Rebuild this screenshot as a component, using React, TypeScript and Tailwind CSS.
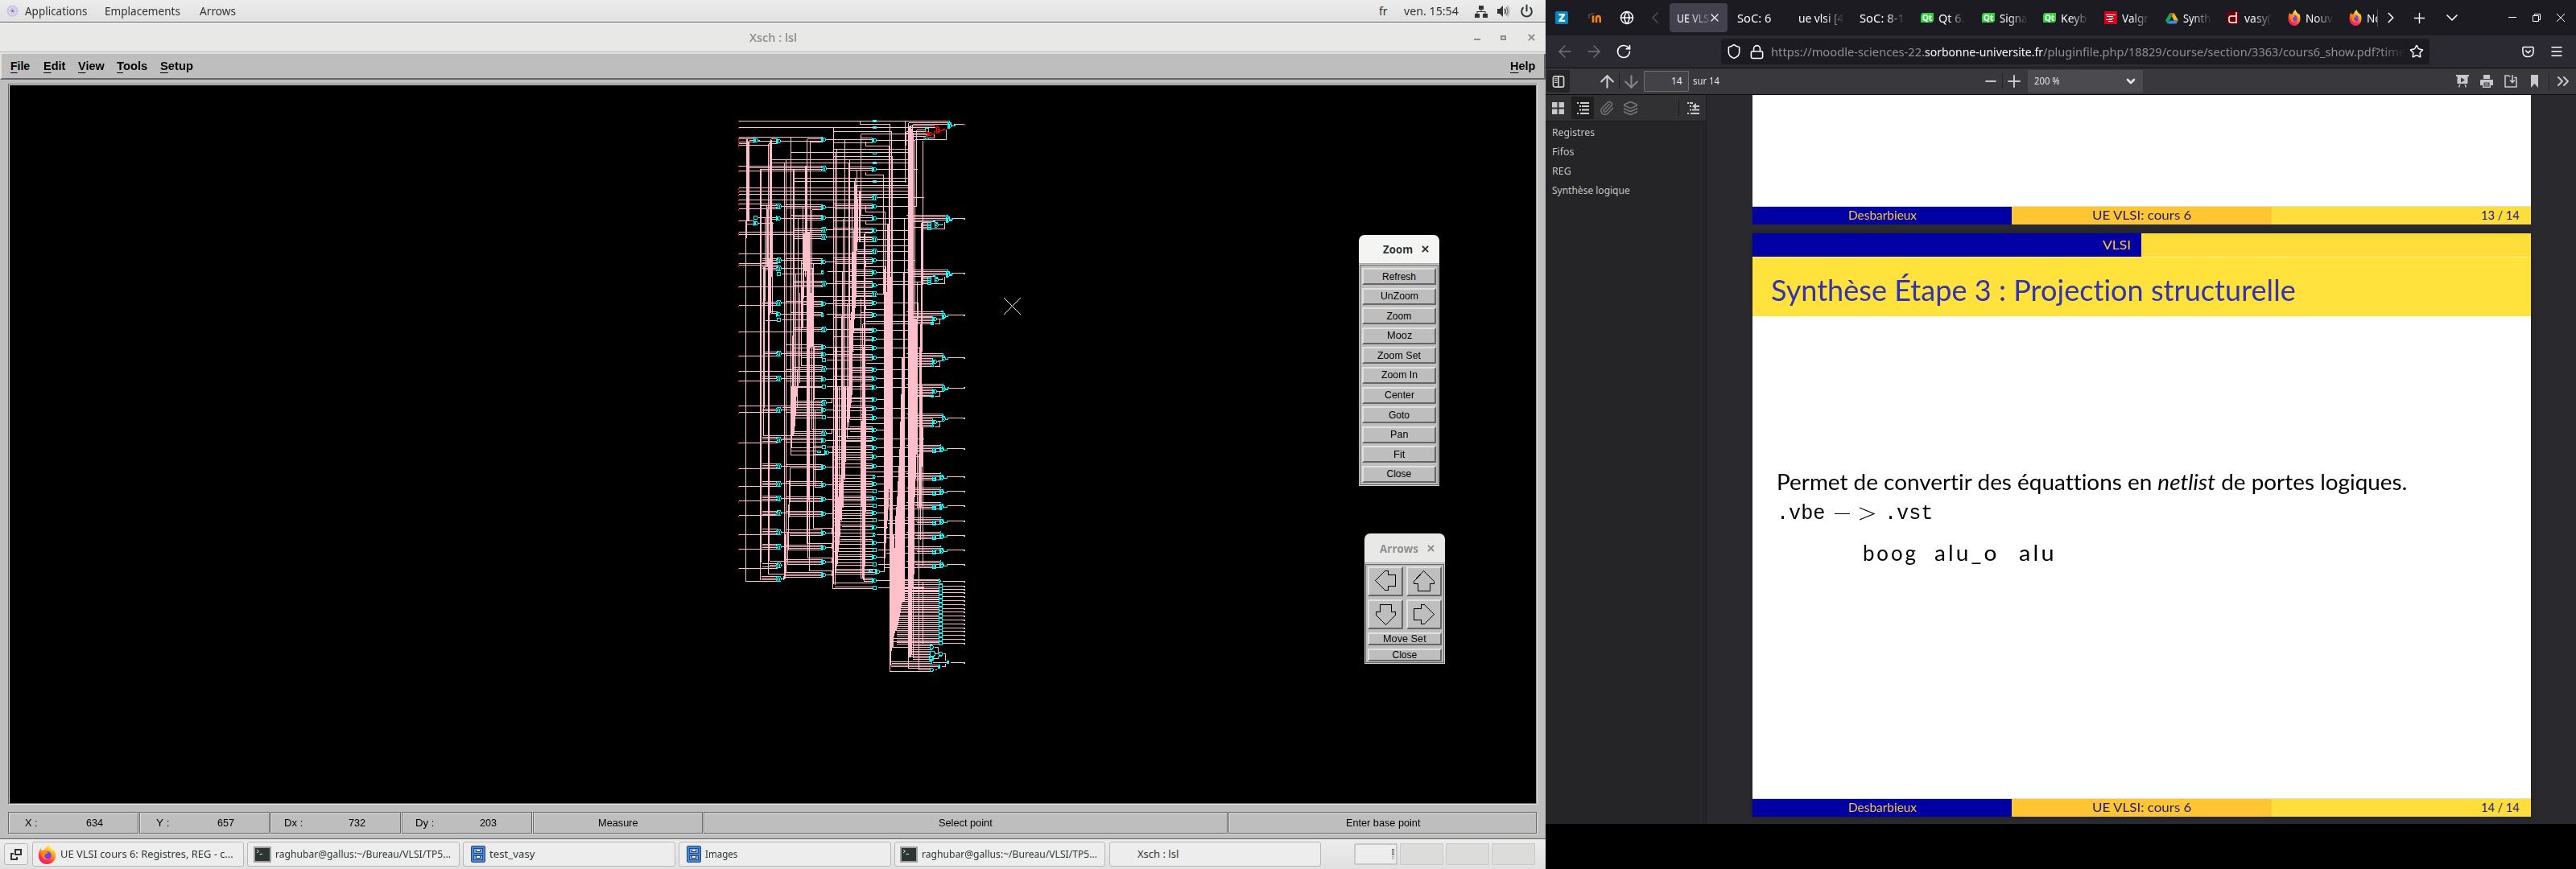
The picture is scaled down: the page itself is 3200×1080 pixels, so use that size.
import React, { useLayoutEffect, useRef, useState } from "react";
import {
  X, Plus, Minus, ChevronLeft, ChevronRight, ChevronDown, ChevronsRight, ArrowLeft, ArrowRight, ArrowUp, ArrowDown,
  RotateCw, Shield, Lock, Star, Menu, Globe, Power, Paperclip, Layers,
} from "lucide-react";

/* Text squeezed or stretched to an exact width. */
function Fit({ w, className = "", children }: { w: number; className?: string; children: React.ReactNode }) {
  const ref = useRef<HTMLSpanElement>(null);
  const [k, setK] = useState(1);
  useLayoutEffect(() => {
    const measure = () => {
      if (ref.current && ref.current.offsetWidth) setK(w / ref.current.offsetWidth);
    };
    measure();
    document.fonts?.ready.then(measure);
  }, [w]);
  return (
    <span className={"block shrink-0 whitespace-pre " + className} style={{ width: w }}>
      <span ref={ref} className="inline-block origin-left" style={{ transform: `scaleX(${k})` }}>
        {children}
      </span>
    </span>
  );
}

const UI = "font-['Noto_Sans',sans-serif]";
const HELV = "font-['Liberation_Sans',sans-serif]";
const SLIDE = "font-['Lato',sans-serif] [font-variant-ligatures:none]";

/* ---------- schematic ---------- */

const snap = (v: number) => Math.floor(v / 3) * 3 + 1.5;
const wires = (rows: number[][], dy = 0) =>
  rows.map(([y, a, b]) => `M${snap(a)} ${snap(y + dy)}H${snap(b)}`).join("");
const risers = (cols: number[][]) => cols.map(([x, a, b]) => `M${snap(x)} ${snap(a)}V${snap(b)}`).join("");

const WIRES_TOP = [
  [61, 53, 832], [73, 505, 617], [85, 53, 690], [73, 860, 893], [100, 407, 622], [109, 509, 690], [121, 53, 365],
  [127, 53, 110], [127, 308, 365], [133, 91, 110], [139, 53, 110], [145, 53, 88], [151, 53, 170], [127, 172, 196],
  [145, 163, 196], [136, 125, 196], [136, 212, 365], [139, 320, 365], [130, 382, 550], [124, 509, 550], [133, 571, 705],
  [142, 407, 550], [154, 526, 614], [166, 407, 684], [178, 248, 684], [193, 407, 625], [205, 175, 684], [217, 175, 684],
  [229, 53, 365], [235, 91, 365], [241, 132, 365], [247, 53, 365], [238, 382, 550], [232, 466, 550], [244, 460, 550],
  [241, 571, 719], [262, 526, 592], [274, 260, 684], [286, 260, 677], [301, 487, 684], [310, 53, 684], [322, 53, 684],
  [334, 53, 684], [355, 53, 550], [370, 53, 195], [376, 132, 195], [382, 158, 195], [388, 53, 195], [340, 487, 550],
  [346, 487, 550], [346, 571, 742], [379, 214, 365], [373, 229, 365], [385, 229, 365], [391, 325, 365], [382, 382, 550],
  [370, 407, 550], [376, 412, 550], [388, 412, 550], [379, 571, 715], [400, 526, 598], [412, 248, 365], [418, 257, 365],
  [424, 214, 365], [430, 308, 365], [412, 509, 550], [421, 382, 550], [433, 407, 550], [424, 571, 684], [445, 526, 610],
  [433, 53, 108], [421, 122, 195], [427, 170, 195], [442, 125, 182], [445, 82, 108], [463, 260, 365], [469, 260, 365],
  [475, 53, 365], [484, 53, 365], [490, 260, 365], [499, 260, 365], [493, 382, 550], [460, 407, 550], [466, 382, 550],
  [475, 462, 550], [478, 520, 550], [469, 571, 684], [496, 490, 550], [502, 490, 550], [510, 505, 550], [502, 571, 684],
  [526, 523, 684], [541, 494, 550], [547, 494, 550], [553, 494, 550], [547, 571, 684], [556, 53, 550], [574, 138, 195],
  [580, 138, 195], [589, 138, 195], [592, 53, 195], [598, 53, 195], [604, 138, 195], [610, 138, 195], [616, 147, 195],
  [574, 229, 365], [580, 214, 365], [592, 285, 365], [586, 382, 550], [571, 407, 550], [577, 412, 550], [592, 412, 550],
  [580, 571, 710], [604, 526, 598], [610, 214, 330], [631, 210, 365], [622, 382, 550], [616, 465, 550], [628, 487, 550],
  [637, 465, 550], [625, 571, 684], [649, 523, 610], [658, 260, 365], [664, 260, 365], [673, 260, 365], [679, 53, 365],
  [667, 382, 550], [658, 412, 550], [661, 465, 550], [676, 460, 550], [682, 465, 550], [658, 590, 684], [670, 571, 740],
  [697, 487, 550], [703, 487, 550], [712, 487, 550], [706, 571, 592], [715, 292, 550], [736, 138, 195], [742, 138, 195],
  [748, 53, 195], [739, 214, 365], [733, 229, 365], [745, 290, 365], [751, 320, 365], [742, 382, 550], [730, 407, 550],
  [736, 480, 550], [748, 412, 550], [739, 571, 722], [763, 526, 592], [772, 172, 195], [778, 172, 195], [775, 248, 365],
  [781, 214, 365], [787, 308, 365], [802, 210, 330], [805, 152, 195], [781, 378, 550], [775, 505, 550], [787, 412, 550],
  [793, 407, 550], [784, 571, 684], [808, 526, 684], [817, 514, 684], [832, 257, 365], [838, 257, 365], [844, 257, 365],
  [847, 53, 260], [838, 382, 550], [835, 465, 550], [841, 465, 550], [850, 465, 550], [841, 571, 684], [865, 407, 550],
  [874, 470, 550], [880, 523, 550], [874, 571, 684], [895, 229, 365], [901, 325, 365], [907, 257, 365], [913, 330, 365],
  [904, 382, 550], [898, 475, 550], [913, 475, 550], [919, 407, 480], [907, 571, 726], [922, 147, 195], [928, 147, 195],
  [937, 53, 195], [922, 229, 365], [928, 214, 365], [934, 229, 365], [943, 285, 365], [952, 378, 550], [930, 382, 550],
  [937, 407, 550], [943, 475, 550], [942, 571, 684], [964, 526, 604], [973, 282, 365], [979, 257, 365], [988, 229, 365],
  [994, 53, 365], [985, 382, 550], [979, 475, 550], [991, 475, 550], [997, 475, 550], [988, 571, 684], [1013, 138, 195],
  [1020, 138, 195], [1030, 53, 195], [1012, 229, 365], [1020, 214, 365], [1030, 229, 365], [1024, 382, 550],
  [1012, 407, 550], [1018, 475, 550], [1030, 475, 550], [1020, 571, 684], [1045, 505, 550], [1051, 275, 365],
  [1051, 378, 550], [1060, 407, 550], [1054, 571, 684], [1054, 275, 365],
];

const WIRES_BOTTOM = [
  [73, 53, 365], [97, 53, 195], [85, 138, 195], [91, 138, 195], [55, 257, 365], [61, 260, 365], [67, 257, 365],
  [61, 382, 401], [46, 330, 550], [43, 470, 550], [55, 470, 550], [49, 571, 598], [79, 214, 365], [88, 214, 365],
  [97, 230, 365], [73, 407, 550], [79, 465, 550], [91, 407, 550], [82, 571, 684], [88, 382, 407], [103, 260, 365],
  [109, 260, 365], [118, 262, 365], [115, 378, 550], [106, 505, 550], [124, 465, 550], [139, 526, 604], [118, 571, 684],
  [151, 465, 550], [160, 325, 550], [157, 450, 550], [169, 465, 550], [162, 571, 598], [169, 257, 365], [175, 255, 365],
  [184, 145, 365], [175, 382, 401], [190, 138, 195], [196, 138, 195], [205, 138, 195], [211, 53, 195], [193, 214, 365],
  [199, 214, 365], [208, 230, 365], [202, 382, 550], [187, 412, 550], [193, 457, 550], [205, 450, 550], [196, 571, 742],
  [223, 330, 365], [226, 378, 550], [229, 248, 365], [241, 308, 350], [241, 248, 310], [247, 390, 550], [253, 330, 372],
  [257, 248, 372], [235, 407, 550], [220, 505, 550], [229, 571, 684], [256, 407, 550], [265, 412, 550], [274, 407, 550],
  [262, 571, 726], [289, 138, 195], [295, 138, 195], [301, 138, 195], [307, 53, 195], [292, 229, 365], [298, 214, 365],
  [304, 245, 365], [310, 330, 365], [301, 382, 550], [289, 412, 550], [295, 510, 550], [307, 520, 550], [298, 571, 684],
  [319, 520, 684], [331, 407, 550], [343, 407, 550], [337, 566, 684], [355, 138, 195], [361, 138, 195], [367, 138, 195],
  [373, 53, 195], [355, 229, 365], [361, 214, 365], [370, 245, 365], [376, 338, 365], [367, 382, 550], [355, 407, 550],
  [361, 510, 550], [373, 412, 550], [364, 571, 614], [385, 407, 550], [394, 407, 550], [391, 570, 684], [409, 138, 195],
  [415, 138, 195], [421, 138, 195], [427, 53, 195], [412, 229, 365], [418, 214, 365], [424, 245, 365], [430, 245, 365],
  [421, 382, 550], [409, 407, 550], [415, 440, 550], [427, 407, 550], [418, 571, 614], [439, 407, 550], [448, 407, 550],
  [445, 570, 684], [457, 607, 684], [466, 138, 195], [472, 138, 195], [478, 138, 195], [481, 53, 195], [466, 229, 365],
  [472, 214, 365], [478, 240, 365], [484, 240, 365], [475, 382, 550], [463, 407, 550], [469, 526, 550], [481, 412, 550],
  [472, 571, 607], [493, 407, 550], [505, 407, 550], [499, 570, 684], [511, 607, 684], [529, 331, 402], [517, 407, 550],
  [523, 435, 550], [535, 412, 550], [526, 571, 607], [532, 138, 195], [541, 138, 195], [547, 138, 195], [553, 53, 195],
  [535, 229, 365], [544, 214, 365], [550, 240, 365], [556, 240, 365], [547, 382, 401], [547, 407, 550], [559, 407, 550],
  [553, 566, 684], [565, 600, 684], [571, 430, 550], [577, 407, 550], [589, 412, 550], [583, 571, 602], [589, 138, 195],
  [595, 138, 195], [601, 138, 195], [607, 53, 195], [586, 308, 402], [592, 229, 365], [598, 214, 365], [604, 238, 365],
  [610, 238, 365], [601, 382, 401], [604, 412, 550], [616, 407, 550], [610, 570, 635], [622, 600, 684], [628, 425, 550],
  [634, 420, 550], [646, 412, 550], [637, 571, 598], [640, 311, 402], [646, 229, 365], [652, 165, 365], [658, 235, 365],
  [664, 235, 365], [655, 382, 401], [661, 138, 195], [667, 165, 195], [673, 138, 195], [679, 53, 195], [658, 412, 550],
  [667, 412, 550], [664, 570, 634], [676, 592, 684], [682, 412, 565], [688, 317, 402], [688, 415, 540], [694, 412, 565],
  [700, 412, 565], [691, 580, 596], [694, 230, 365], [700, 163, 365], [706, 220, 365], [712, 224, 365], [703, 382, 401],
  [709, 135, 195], [715, 135, 195], [721, 135, 195], [727, 80, 195], [718, 214, 224], [715, 509, 550], [721, 517, 550],
  [727, 520, 550], [733, 407, 550], [724, 571, 800], [748, 410, 550], [754, 404, 550], [751, 570, 742],
];

const RISERS = [
  [82, 127, 495], [85, 127, 432], [88, 139, 432], [91, 133, 432], [80, 433, 1777], [82, 442, 446],
  [134, 238, 1770], [137, 238, 1705], [145, 600, 1234], [148, 600, 1130], [152, 421, 730], [158, 372, 600],
  [161, 385, 600], [164, 145, 1750], [166, 570, 1700], [169, 136, 780], [172, 127, 775], [175, 130, 640], [178, 436, 775],
  [223, 217, 1768], [229, 205, 1745], [226, 1600, 1765], [248, 121, 1305], [251, 1050, 1280], [257, 238, 1230],
  [260, 238, 1200], [254, 860, 1220], [266, 630, 1160], [271, 985, 1130], [274, 424, 1055], [280, 700, 1035],
  [286, 580, 970], [289, 680, 830], [292, 380, 832], [295, 477, 720], [298, 477, 620], [302, 230, 640], [305, 230, 620],
  [308, 127, 1636], [311, 480, 1690], [314, 560, 1470], [317, 700, 1738], [320, 133, 905], [323, 700, 902], [326, 391, 1210],
  [329, 607, 900], [332, 590, 1580], [335, 900, 1100], [332, 900, 1275], [338, 1137, 1426], [245, 1350, 1480], [242, 1400, 1538],
  [239, 1490, 1660], [236, 1590, 1715], [404, 1270, 1804], [407, 85, 1785], [412, 178, 1790], [418, 166, 1720],
  [415, 900, 1740], [427, 1050, 1550], [421, 1050, 1710], [442, 424, 1500], [436, 785, 1550], [439, 620, 1500], [448, 130, 1400],
  [458, 740, 1243], [466, 205, 1170], [463, 217, 1200], [469, 845, 1130], [472, 845, 1110], [475, 382, 1080],
  [478, 730, 920], [481, 463, 850], [484, 286, 715], [487, 274, 705], [490, 301, 690], [494, 241, 545], [496, 350, 510],
  [502, 322, 510], [505, 322, 512], [509, 109, 412], [505, 61, 73], [509, 720, 1765], [514, 817, 1765], [517, 900, 1770],
  [520, 480, 1777], [523, 475, 1720], [526, 136, 154], [526, 250, 262], [526, 377, 400], [526, 430, 445], [526, 580, 604],
  [526, 745, 763], [526, 1130, 1520], [592, 262, 706], [598, 400, 1690], [595, 610, 1741], [601, 600, 1630], [604, 700, 1580],
  [607, 445, 1550], [610, 445, 1500], [613, 154, 1415], [616, 73, 2113], [619, 640, 2085], [622, 100, 2023], [625, 193, 2023],
  [628, 1600, 2020], [631, 1600, 1980], [634, 1650, 1970], [674, 61, 290], [670, 424, 1850], [667, 625, 1850],
  [664, 940, 1850], [661, 940, 1850], [715, 94, 380], [709, 130, 1390], [740, 133, 670], [733, 440, 1500],
  [736, 440, 920], [730, 817, 1620], [727, 900, 1300], [724, 1300, 2106], [740, 1200, 1720], [740, 1780, 2010],
  [718, 660, 1500], [721, 740, 800], [401, 1096, 1112], [401, 1210, 1226], [401, 1580, 1600], [401, 1635, 1655],
  [401, 1690, 1708], [401, 1738, 1755], [220, 1755, 1770],
];

const BANDS = [
  "81,140 93,140 93,432 81,432", "168,136 177,136 177,636 168,636", "246,1050 273,1050 264,1130 264,1190 258,1234 246,1234",
  "306,475 318,475 318,1440 306,1440", "436,1050 454,1050 454,1290 448,1390 442,1400 436,1500 430,1620 421,1700 412,1750 412,1680 418,1500 424,1470 436,1360",
  "456,1050 474,1050 466,1150 466,1180 456,1190", "480,480 492,480 492,700 480,860 474,1050 462,1050 465,850 474,760",
  "604,700 616,700 616,1410 607,1500 604,1580 598,1600 598,1050 604,1000", "508,1180 526,1180 526,1330 520,1500 508,1500",
  "684,80 694,80 704,110 704,800 720,800 720,1150 714,1360 708,1500 708,1740 700,1800 700,2040 694,2060 685,2060",
  "661,1000 673,1000 673,1800 661,1860 649,1930 640,1965 637,1960 637,1540 643,1470 652,1300",
  "616,1680 634,1680 634,1970 625,2020 616,2080", "726,1050 738,1050 738,1300 732,1500 726,1500",
];

/* Gates: [x, y] of the left edge and of the centre line. */
const ANDS = [
  [108, 134], [194, 136], [362, 130], [551, 133], [551, 241], [362, 382], [551, 379], [194, 424], [362, 421], [551, 424],
  [108, 442], [551, 469], [362, 586], [551, 580], [551, 625], [551, 673], [362, 742], [551, 739], [194, 781], [551, 784],
  [551, 841], [551, 874], [362, 904], [551, 907], [362, 931], [551, 943], [551, 988], [362, 1024], [551, 1021], [551, 1054],
  [551, 1099], [551, 1132], [551, 1168], [551, 1212], [551, 1246], [551, 1280], [551, 1312], [551, 1348], [551, 1414],
  [551, 1468], [551, 1522], [551, 1576], [551, 1632], [551, 1687], [562, 1741], [551, 1774], [362, 1138], [362, 1252],
  [374, 1297], [362, 1351], [362, 1417], [362, 1471], [362, 1525], [362, 1597], [362, 1651], [362, 1705], [362, 1753],
];
const COMPLEX = [
  [194, 379], [362, 238], [551, 346], [362, 466], [362, 493], [551, 502], [551, 547], [194, 580], [194, 610], [362, 667],
  [551, 706], [194, 739], [362, 838], [194, 928], [362, 985], [194, 1021], [362, 1111], [194, 1138], [362, 1225], [194, 1249],
  [194, 1348], [194, 1414], [194, 1468], [194, 1522], [194, 1594], [194, 1648], [194, 1718], [194, 1768],
];
const BUFFERS = [
  [110, 421], [196, 630], [196, 802], [364, 952], [364, 1051], [364, 1164], [364, 1276], [554, 1441], [554, 1495],
  [554, 1549], [554, 1660], [554, 1714], [554, 1801], [749, 93],
];
const FLAT = [[554, 61], [554, 85], [554, 180], [554, 217], [554, 286], [347, 1294], [537, 1738], [749, 128]];
const NUBS = [[362, 625], [362, 784], [554, 1387], [554, 1603]];

const and = ([x, y]: number[]) => {
  const a = snap(x), b = snap(y);
  return `M${a} ${b - 10.5}V${b + 10.5}M${a} ${b - 6}H${a + 12}L${a + 16} ${b - 3}V${b + 3}L${a + 12} ${b + 6}H${a}M${a + 4.5} ${b - 6}V${b + 6}M${a + 16} ${b}H${a + 21}`;
};
const complex = ([x, y]: number[]) => {
  const a = snap(x), b = snap(y);
  return `M${a} ${b - 9}H${a + 15}V${b - 6}M${a} ${b + 9}H${a + 15}V${b + 6}M${a} ${b - 3}H${a + 6}M${a} ${b + 3}H${a + 6}M${a + 1} ${b - 9}V${b - 3}M${a + 1} ${b + 3}V${b + 9}M${a + 7} ${b - 9}V${b + 9}M${a + 13} ${b - 6}V${b + 6}M${a + 17} ${b - 4}V${b + 4}M${a + 17} ${b}H${a + 22}`;
};
const box = (w: number, h: number) => ([x, y]: number[]) => {
  const a = snap(x), b = snap(y);
  return `M${a} ${b - h / 2}h${w}v${h}h${-w}z`;
};
const nub = ([x, y]: number[]) => {
  const a = snap(x), b = snap(y);
  return `M${a} ${b - 7.5}V${b + 7.5}M${a} ${b - 4.5}h6v3M${a} ${b + 4.5}h6v-3M${a + 6} ${b}h5`;
};

/* Output stages at the right: y of the output wire. */
const STAGES = [423, 627];
const MID_STAGES = [784, 942, 1055, 1167];
const SMALL_STAGES = [1281, 1386, 1440, 1495, 1551, 1605, 1659, 1713];
const PAD_Y = [1776, 1794, 1807, 1819, 1834, 1848, 1863, 1878, 1891, 1906, 1920, 1935, 1950, 1963, 1978, 1993, 2008];
const PINS_IN = [
  61, 86, 123, 130, 140, 147, 153, 229, 247, 312, 324, 336, 355, 370, 390, 433, 477, 483, 557, 592, 600, 679, 750, 848, 938,
  993, 1031, 1123, 1149, 1261, 1357, 1423, 1479, 1533, 1602, 1658, 1729,
];

const stagePink = [
  ...STAGES.flatMap((y) => [
    [y - 11, 677, 828], [y - 5, 700, 828], [y + 1, 700, 826], [y + 7, 700, 826], [y + 13, 700, 785], [y + 16, 733, 757],
    [y + 22, 740, 757], [y + 28, 740, 757], [y + 34, 690, 757], [y + 40, 740, 757], [y + 40, 768, 820], [y + 25, 795, 810], [y + 1, 850, 893],
  ]),
  ...MID_STAGES.flatMap((y) => [
    [y - 13, 677, 812], [y - 7, 684, 812], [y - 1, 709, 812], [y + 5, 700, 774], [y + 10, 700, 774], [y + 16, 684, 774],
    [y + 22, 700, 774], [y + 28, 700, 774], [y + 33, 684, 774], [y + 33, 780, 802], [y + 14, 792, 810], [y + 1, 835, 893],
  ]),
  ...SMALL_STAGES.flatMap((y) => [
    [y - 12, 677, 806], [y - 6, 684, 806], [y, 710, 806], [y + 6, 715, 776], [y + 12, 690, 776], [y + 12, 787, 803], [y, 830, 893],
  ]),
  ...PAD_Y.flatMap((y) => [[y, 812, 893], [y - 4, 640, 800], [y + 3, 640, 800]]),
  [67, 684, 832], [73, 700, 832], [79, 688, 785], [85, 690, 785], [94, 715, 750], [100, 677, 755], [106, 677, 755],
  [112, 690, 755], [118, 690, 755], [124, 740, 750], [130, 709, 827], [124, 760, 782],
  [1814, 640, 800], [1845, 636, 800], [1875, 645, 800], [1990, 628, 800], [2001, 628, 800], [2011, 740, 800],
  [2018, 704, 765], [2023, 622, 765], [2032, 690, 765], [2038, 694, 765], [2044, 694, 765], [2050, 694, 765],
  [2056, 694, 765], [2062, 704, 765], [2068, 700, 765], [2077, 616, 765], [2080, 775, 828], [2083, 622, 765], [2089, 616, 798],
  [2095, 620, 798], [2101, 685, 765], [2107, 724, 765], [2113, 616, 765], [2079, 842, 893], [2023, 782, 797],
  [2048, 784, 800], [2065, 778, 797], [2047, 814, 823], [2095, 808, 823], [2107, 784, 790],
];
const stageRisers = [
  ...STAGES.flatMap((y) => [[820, y + 12, y + 40], [810, y + 18, y + 25]]),
  ...MID_STAGES.flatMap((y) => [[802, y + 12, y + 33]]),
  [827, 90, 130], [782, 105, 124], [685, 67, 90], [700, 73, 120], [677, 100, 150], [797, 2023, 2040], [797, 2055, 2065],
  [823, 2047, 2072], [823, 2083, 2095], [616, 1800, 2113], [685, 2050, 2101], [694, 2030, 2060], [704, 1750, 2062],
];
const orGate = (x: number, y: number) =>
  `M${x} ${y - 10.5}V${y + 10.5}M${x} ${y - 10.5}h9v6M${x} ${y + 9}h6l6 -6v-6l-6 -3M${x + 3} ${y - 3}h4M${x + 3} ${y + 3}h4`;
const stageCyan = [
  ...STAGES.map((y) => orGate(828, y + 6) + `M838 ${y + 9}h10v-6h5M822 ${y - 11}h10v6` + orGate(784, y + 26) + `M798 ${y + 25}h10M757 ${y + 16}h12v27h-12zM757 ${y + 22}h12M757 ${y + 29}h12M757 ${y + 36}h12M777 ${y + 9}h10`),
  ...MID_STAGES.map((y) => orGate(811, y + 5) + `M821 ${y + 7}h12v-6h4M806 ${y - 13}h9v8` + and([776, y + 15]) + `M770 ${y + 29}h9v6h-9z`),
  ...SMALL_STAGES.map((y) => orGate(804, y + 5) + `M804 ${y - 12}h4M816 ${y + 7}h13v-6M776 ${y + 2}h10v13h-10zM776 ${y + 8}h10M814 ${y - 3}v14`),
  ...PAD_Y.slice(1).map((y) => `M800 ${y - 6}h11v13h-11z`),
  "M799 1767v14M799 1770l6 4v4l-6 3M811 1775h0",
  orGate(834, 78) + "M832 62h6v6M844 80h14v-6h3",
  "M764 2016h8l6 4v6l-6 5h-8M767 2020v8M766 2038h13l6 6v8l-6 6h-13zM764 2060h13v10h-13zM766 2074h6v10h-6M800 2042h8l4 3v6l-4 4h-8zM796 2090h6v10h-6M799 2092v8M766 2101h9l4 4v4l-4 4h-9zM829 2074h5v10h-5zM827 2080h8",
].join("");

const PINK = wires(WIRES_TOP) + wires(WIRES_BOTTOM, 1050) + risers(RISERS) + wires(stagePink) + risers(stageRisers);
const CYAN =
  ANDS.map(and).join("") + COMPLEX.map(complex).join("") + BUFFERS.map(box(12, 12)).join("") +
  FLAT.map(box(13, 6)).join("") + NUBS.map(nub).join("") + stageCyan;
const KNOCKOUT = [...ANDS, ...COMPLEX, ...BUFFERS];

function Schematic() {
  return (
    <svg viewBox="0 0 960 2160" className="absolute left-[888px] top-[24px] h-[720px] w-[320px]" shapeRendering="crispEdges">
      <path d={PINK} stroke="#ffc0cb" strokeWidth="3.1" fill="none" />
      {BANDS.map((p) => (
        <polygon key={p} points={p} fill="#ffc0cb" />
      ))}
      {KNOCKOUT.map(([x, y]) => (
        <rect key={`${x}-${y}`} x={snap(x)} y={snap(y) - 6} width="15" height="12" fill="#000" />
      ))}
      <path d={CYAN} stroke="#00ffff" strokeWidth="3.4" fill="none" />
      <path
        d={orGate(790, 97) + "M783 79h10v8M800 98h15v-5h8M779 100h8" + and([757, 108]) + "M749 100h6M749 108h6M749 117h6M782 100v12"}
        stroke="#ff0000" strokeWidth="3.4" fill="none"
      />
      {PINS_IN.map((y) => (
        <rect key={y} x="51" y={snap(y) - 3} width="3" height="6" fill="#ff0000" />
      ))}
      {[...STAGES, ...MID_STAGES, ...SMALL_STAGES, ...PAD_Y, 2079].map((y) => (
        <rect key={y} x="891" y={snap(y) - 3} width="6" height="6" fill="#add8e6" />
      ))}
      <rect x="891" y="72" width="6" height="6" fill="#ff0000" />
    </svg>
  );
}

/* ---------- left screen ---------- */

const BEVEL = "border-[#e0e0e0] border-b-[#666] border-r-[#666] bg-[#bebebe]";

function MotifButton({ children, w, className }: { children: string; w: number; className: string }) {
  return (
    <div className={`flex shrink-0 items-center justify-center border-2 ${BEVEL} ${className}`}>
      <Fit w={w} className={`${HELV} text-[12px] leading-[14px] text-black`}>{children}</Fit>
    </div>
  );
}

const ZOOM_ITEMS: [string, number][] = [
  ["Refresh", 42], ["UnZoom", 47], ["Zoom", 31], ["Mooz", 31], ["Zoom Set", 54], ["Zoom In", 45], ["Center", 37],
  ["Goto", 26], ["Pan", 22], ["Fit", 14], ["Close", 31],
];

const ARROWS = [
  "M9.5 17.5L21.5 5.5H25.5V10.5H34.5V24.5H25.5V29.5H21.5Z",
  "M21.5 5.5L34.5 18.5V21.5H29.5V30.5H14.5V21.5H9.5V18.5Z",
  "M22.5 31.5L10.5 19.5V15.5H15.5V6.5H29.5V15.5H34.5V19.5Z",
  "M34.5 18.5L22.5 30.5H18.5V25.5H9.5V11.5H18.5V6.5H22.5Z",
];

function XMark({ className }: { className: string }) {
  return (
    <svg viewBox="0 0 10 10" className={className} fill="none" stroke="currentColor" strokeWidth="2.2">
      <path d="M1 1L9 9M9 1L1 9" />
    </svg>
  );
}

function ZoomPalette() {
  return (
    <div className="absolute left-[1676px] top-[186px] w-[100px]">
      <div className="flex h-[36px] items-center rounded-t-[7px] border-b border-[#a9a9a6] bg-[#f4f4f3] pl-[30px] text-[#2e3436]">
        <Fit w={37} className="font-['Open_Sans',sans-serif] text-[14px] font-bold">Zoom</Fit>
        <XMark className="ml-[11px] h-[9px] w-[9px]" />
      </div>
      <div className="flex h-[276px] flex-col justify-between border border-[#cfcfcf] bg-[#bebebe] px-[3px] pb-[3px] pt-[4px] outline-1 -outline-offset-2 outline-[#666]">
        {ZOOM_ITEMS.map(([t, w]) => (
          <MotifButton key={t} w={w} className="h-[21px] w-[92px]">{t}</MotifButton>
        ))}
      </div>
    </div>
  );
}

function ArrowsPalette() {
  return (
    <div className="absolute left-[1683px] top-[557px] w-[100px]">
      <div className="flex h-[37px] items-center rounded-t-[7px] border-b border-[#a9a9a6] bg-[#e8e8e6] pl-[19px] text-[#8b8e8f]">
        <Fit w={48} className="font-['Open_Sans',sans-serif] text-[14px] font-bold">Arrows</Fit>
        <XMark className="ml-[11px] h-[9px] w-[9px]" />
      </div>
      <div className="flex h-[125px] flex-col gap-[4px] border border-[#cfcfcf] bg-[#bebebe] px-[3px] py-[3px] outline-1 -outline-offset-2 outline-[#666]">
        <div className="grid shrink-0 grid-cols-2 gap-x-[4px] gap-y-[4px]">
          {ARROWS.map((d) => (
            <div key={d} className={`h-[37px] border-2 ${BEVEL}`}>
              <svg viewBox="2 2 40 33" className="h-[33px] w-[40px]" fill="none" stroke="#000" shapeRendering="crispEdges">
                <path d={d} />
              </svg>
            </div>
          ))}
        </div>
        <MotifButton w={54} className="h-[16px] w-[92px]">Move Set</MotifButton>
        <MotifButton w={31} className="h-[16px] w-[92px]">Close</MotifButton>
      </div>
    </div>
  );
}

function Cell({ className, children }: { className: string; children: React.ReactNode }) {
  return (
    <div className={`flex h-[27px] items-center border border-[#666] text-black shadow-[inset_1px_1px_0_#dedede,1px_1px_0_#dedede] ${HELV} text-[12px] ${className}`}>
      {children}
    </div>
  );
}

function Firefox({ className }: { className: string }) {
  return (
    <svg viewBox="0 0 24 24" className={className} preserveAspectRatio="none">
      <defs>
        <linearGradient id="ff" x1="0.8" y1="0" x2="0.3" y2="1">
          <stop offset="0.1" stopColor="#fff44f" />
          <stop offset="0.45" stopColor="#ff980e" />
          <stop offset="0.75" stopColor="#ff3647" />
          <stop offset="1" stopColor="#e31587" />
        </linearGradient>
      </defs>
      <path fill="url(#ff)" d="M12 24C5 24 0.8 19 0.8 13C0.8 9 2.5 5.500 4 4.200L4.600 7L8.500 6.500C9.800 4 12 1 14.500 0C14.500 3 18 4.500 20 7L21 6C23 9 23.400 11.500 23.200 14C22.700 20 18 24 12 24Z" />
      <circle cx="12.500" cy="13" r="5" fill="#7542e5" />
      <path fill="#ff8a16" d="M4.600 7L9 7.500C11 7.200 12.500 9 13.500 9.500C12 11.500 9 11 9 13.500C8 15.500 11 18 14 17C10 20.500 5 17 5 12Z" />
    </svg>
  );
}

const Terminal = () => (
  <div className="flex h-[20px] w-[22px] shrink-0 border-2 border-[#a0a09c] bg-[#2b3532] text-white">
    <svg viewBox="0 0 18 16" className="h-[16px] w-[18px]" fill="none" stroke="#e8e8e8">
      <path d="M2 2L4.500 4L2 6M5.500 7.500H9" />
    </svg>
  </div>
);

const Cabinet = () => (
  <div className="flex h-[21px] w-[18px] shrink-0 flex-col gap-[2px] rounded-[2px] border border-[#20487f] bg-[#4f86d0] p-[2px]">
    {[0, 1].map((i) => (
      <div key={i} className="flex h-[7px] items-center justify-center border border-[#204a87] bg-[#7ba9e6]">
        <div className="h-[3px] w-[6px] border border-t-0 border-[#333] bg-white" />
      </div>
    ))}
  </div>
);

function Task({ className, icon, label, w }: { className: string; icon?: React.ReactNode; label: string; w: number }) {
  return (
    <div className={`flex h-[31px] shrink-0 items-center rounded-[3px] border border-[#b8b8b6] bg-[#ededed] ${className}`}>
      {icon}
      <Fit w={w} className={`${UI} ml-[5px] text-[13px] text-[#2e3436]`}>{label}</Fit>
    </div>
  );
}

function LeftScreen() {
  return (
    <div className="flex h-[1080px] w-[1920px] shrink-0 flex-col overflow-hidden bg-[#bebebe]">
      <div className={`flex h-[28px] shrink-0 items-center border-b border-[#5e5e5e] bg-linear-to-b from-[#ededed] to-[#e0e0e0] pl-[8px] text-[14px] text-[#2e3436] ${UI}`}>
        <svg viewBox="0 0 15 15" className="h-[15px] w-[15px]">
          <circle cx="7.500" cy="7.500" r="6" fill="#dcdcf2" stroke="#b4b4e2" strokeWidth="2" strokeDasharray="1.500 1" />
          <circle cx="7.500" cy="7.500" r="3" fill="none" stroke="#8f94d4" strokeDasharray="1.500 1" />
          <circle cx="7.500" cy="7.500" r="1.500" fill="#c0504a" />
        </svg>
        <Fit w={77} className="ml-[8px]">Applications</Fit>
        <Fit w={94} className="ml-[22px]">Emplacements</Fit>
        <Fit w={45} className="ml-[24px]">Arrows</Fit>
        <Fit w={11} className="ml-auto">fr</Fit>
        <Fit w={68} className="ml-[20px]">ven. 15:54</Fit>
        <svg viewBox="0 0 16 16" className="ml-[20px] h-[16px] w-[16px]" fill="#2e3436">
          <path d="M5 1h6v5H5zM0 11h6v5H0zM10 11h6v5h-6zM7.500 6h1v2h5v3h-1V9h-9v2h-1V8h5z" />
        </svg>
        <svg viewBox="0 0 16 16" className="ml-[12px] h-[16px] w-[16px]" fill="#2e3436">
          <path d="M0 5h3l4-4v14l-4-4H0z" />
          <path d="M9 5q2.500 3 0 6" stroke="#2e3436" strokeWidth="1.500" fill="none" />
          <path d="M11 3q4 5 0 10" stroke="#777" strokeWidth="1.500" fill="none" />
          <path d="M12.500 1q5 7 0 14" stroke="#bbb" strokeWidth="1.500" fill="none" />
        </svg>
        <Power className="ml-[12px] mr-[15px] h-[17px] w-[17px]" strokeWidth={2.8} />
      </div>
      <div className="flex h-[37px] shrink-0 items-center border-b border-t border-b-[#b9b9b5] border-t-white bg-[#e8e8e6] pl-[931px] text-[#8b8e8f]">
        <Fit w={59} className="font-['Open_Sans',sans-serif] text-[14px] font-semibold">Xsch : lsl</Fit>
        <div className="ml-auto mt-[4px] h-[2px] w-[8px] bg-[#8b8e8f]" />
        <div className="ml-[25px] h-[6px] w-[7px] border-2 border-[#8b8e8f]" />
        <XMark className="ml-[27px] mr-[13px] h-[9px] w-[9px]" />
      </div>
      <div className="h-[2px] shrink-0 bg-[#e2e2e0]" />
      <div className={`flex h-[32px] shrink-0 items-center border-b-2 border-l-2 border-r-2 border-b-[#666] border-l-[#e0e0e0] border-r-[#666] pl-[11px] pr-[11px] text-[14px] font-bold leading-[15px] text-black ${HELV}`}>
        <Fit w={24}><u className="underline-offset-[3px]">F</u>ile</Fit>
        <Fit w={27} className="ml-[17px]"><u className="underline-offset-[3px]">E</u>dit</Fit>
        <Fit w={33} className="ml-[16px]"><u className="underline-offset-[3px]">V</u>iew</Fit>
        <Fit w={38} className="ml-[15px]"><u className="underline-offset-[3px]">T</u>ools</Fit>
        <Fit w={41} className="ml-[16px]"><u className="underline-offset-[3px]">S</u>etup</Fit>
        <Fit w={31} className="ml-auto"><u className="underline-offset-[3px]">H</u>elp</Fit>
      </div>
      <div className="mx-[10px] mt-[5px] shrink-0 border border-[#666] border-b-[#e0e0e0] border-r-[#e0e0e0]">
        <div className="relative h-[894px] border border-[#e0e0e0] border-b-[#666] border-r-[#999] bg-black">
          <Schematic />
          <svg viewBox="0 0 21 21" className="absolute left-[1235px] top-[264px] h-[21px] w-[21px]" stroke="#e5e5e5" shapeRendering="crispEdges">
            <path d="M0 0L21 21M21 0L0 21" />
          </svg>
          <ZoomPalette />
          <ArrowsPalette />
        </div>
      </div>
      <div className="ml-[10px] mt-[9px] flex shrink-0 gap-[1px]">
        <Cell className="w-[162px] pl-[20px]"><Fit w={16}>X :</Fit><Fit w={21} className="ml-[60px]">634</Fit></Cell>
        <Cell className="w-[162px] pl-[20px]"><Fit w={16}>Y :</Fit><Fit w={21} className="ml-[60px]">657</Fit></Cell>
        <Cell className="w-[162px] pl-[16px]"><Fit w={23}>Dx :</Fit><Fit w={21} className="ml-[57px]">732</Fit></Cell>
        <Cell className="w-[162px] pl-[16px]"><Fit w={23}>Dy :</Fit><Fit w={21} className="ml-[57px]">203</Fit></Cell>
        <Cell className="w-[211px] justify-center"><Fit w={50}>Measure</Fit></Cell>
        <Cell className="w-[651px] justify-center"><Fit w={67}>Select point</Fit></Cell>
        <Cell className="w-[383px] justify-center"><Fit w={92}>Enter base point</Fit></Cell>
      </div>
      <div className="mt-auto flex h-[38px] shrink-0 items-center border-t border-[#5e5e5e] bg-linear-to-b from-[#ededed] to-[#e0e0e0] pl-[5px]">
        <div className="flex h-[27px] w-[30px] items-center justify-center rounded-[3px] border border-[#b8b8b6] bg-[#ededed]">
          <svg viewBox="0 0 14 14" className="h-[14px] w-[14px]" fill="none" stroke="#2e3436" strokeWidth="2">
            <path d="M6 1h7v6H6zM4 6H1v7h7v-3" />
          </svg>
        </div>
        <Task className="ml-[5px] w-[263px] pl-[6px]" icon={<Firefox className="h-[24px] w-[23px]" />} label="UE VLSI cours 6: Registres, REG - c..." w={215} />
        <Task className="ml-[4px] w-[264px] pl-[7px]" icon={<Terminal />} label="raghubar@gallus:~/Bureau/VLSI/TP5..." w={218} />
        <Task className="ml-[4px] w-[264px] pl-[9px]" icon={<Cabinet />} label="test_vasy" w={56} />
        <Task className="ml-[4px] w-[264px] pl-[9px]" icon={<Cabinet />} label="Images" w={40} />
        <Task className="ml-[4px] w-[262px] pl-[6px]" icon={<Terminal />} label="raghubar@gallus:~/Bureau/VLSI/TP5..." w={218} />
        <Task className="ml-[5px] w-[263px] pl-[29px]" label="Xsch : lsl" w={51} />
        <div className="ml-[41px] flex gap-[3px]">
          <div className="flex h-[27px] w-[54px] items-center justify-end rounded-l-[3px] border-2 border-[#c8c8c6] bg-[#ededed] pr-[2px]">
            <div className="flex flex-col gap-px">
              <div className="h-[8px] w-[3px] border border-[#777]" />
              <div className="h-[4px] w-[3px] border border-[#bbb]" />
            </div>
          </div>
          {[0, 1, 2].map((i) => (
            <div key={i} className="h-[27px] w-[54px] rounded-[1px] border border-[#c9c9c7] bg-[#dcdcdb]" />
          ))}
        </div>
      </div>
    </div>
  );
}

/* ---------- browser ---------- */

const Qt = () => <div className="flex h-[12px] w-[16px] shrink-0 items-center justify-center bg-[#2cd13a] font-['Open_Sans',sans-serif] text-[10px] font-bold leading-none text-white [clip-path:polygon(12%_0,100%_0,100%_80%,88%_100%,0_100%,0_20%)]">Qt</div>;
const Valgrind = () => (
  <svg viewBox="0 0 16 16" className="h-[16px] w-[16px] shrink-0">
    <path fill="#d9001b" d="M0 0h16v16H0z" />
    <path stroke="#fff" d="M2 4.500h12M3 6.500h8M6 8.500h6M2 10.500h8M5 12.500h6" />
  </svg>
);
const Drive = () => (
  <svg viewBox="0 0 16 15" className="h-[15px] w-[16px] shrink-0">
    <path fill="#ea4335" d="M5.500 1h5L8 5z" />
    <path fill="#0fa958" d="M5.500 1L0 10.500 2.600 14.500 8 5z" />
    <path fill="#fbbc04" d="M10.500 1L16 10.500H10.500L8 5z" />
    <path fill="#4285f4" d="M2.600 14.500L5.200 10.500H16L13.400 14.500z" />
    <path fill="#1c1b22" d="M8 6.500L10.500 10.500H5.500z" />
  </svg>
);
const DBox = () => (
  <svg viewBox="0 0 16 16" className="h-[16px] w-[16px] shrink-0">
    <path fill="#6b0008" d="M0 0h16v16H0z" />
    <path fill="none" stroke="#fff" strokeWidth="1.500" d="M12 1v14M12 6H5.500q-2.500 0-2.500 2.500v3q0 2.500 2.500 2.500H12" />
  </svg>
);

const TABS: { icon?: React.ReactNode; label: string; w: number }[] = [
  { label: "SoC: 6", w: 42 },
  { label: "ue vlsi [4", w: 56 },
  { label: "SoC: 8-1", w: 56 },
  { icon: <Qt />, label: "Qt 6.", w: 32 },
  { icon: <Qt />, label: "Signa", w: 34 },
  { icon: <Qt />, label: "Keyb", w: 32 },
  { icon: <Valgrind />, label: "Valgr", w: 33 },
  { icon: <Drive />, label: "Synth", w: 34 },
  { icon: <DBox />, label: "vasy(", w: 33 },
  { icon: <Firefox className="-mt-px h-[20px] w-[16px] shrink-0" />, label: "Nouv", w: 34 },
  { icon: <Firefox className="-mt-px h-[20px] w-[16px] shrink-0" />, label: "Nouv", w: 34 },
];

const FADE = "[mask-image:linear-gradient(to_right,#000_calc(100%-24px),transparent)]";

function SlideFooter({ page }: { page: string }) {
  return (
    <div className={`flex h-[23px] shrink-0 border-t border-[#e6e0c8] bg-[#ffdd3a] text-[14.5px] leading-[21px] text-[#1a1a8c] ${SLIDE}`}>
      <div className="flex w-[322px] justify-center bg-[#0000a3] text-[#ffc533]"><Fit w={85}>Desbarbieux</Fit></div>
      <div className="flex w-[323px] justify-center bg-[#ffc533]"><Fit w={124}>UE VLSI: cours 6</Fit></div>
      <div className="flex flex-1 justify-end pr-[14px]"><Fit w={48}>{page}</Fit></div>
    </div>
  );
}

function PdfIcons() {
  return (
    <div className="ml-auto flex items-center pr-[4px]">
      <svg viewBox="0 0 16 16" className="h-[16px] w-[16px]" fill="#c8c8ca">
        <path fillRule="evenodd" d="M0 0h16v2H0zM1.500 2h13v9h-13zM6 3.500v6l5-3zM4 12h1.500L4.500 15.500H3zM10.500 12H12l1 3.500h-1.500z" />
      </svg>
      <svg viewBox="0 0 16 16" className="ml-[14px] h-[16px] w-[16px]" fill="#c8c8ca">
        <path fillRule="evenodd" d="M4 0h8v5H4zM1 6h14q1 0 1 1v6h-3v3H3v-3H0V7q0-1 1-1zM4.500 9.500v5h7v-5zM5.500 10.500h5v1h-5zM5.500 12.500h5v1h-5z" />
      </svg>
      <svg viewBox="0 0 16 16" className="ml-[14px] h-[16px] w-[16px]" fill="none" stroke="#c8c8ca" strokeWidth="1.600">
        <path d="M7 2.500L5.500 1H1v14h14V3.500h-3M10 0v9M7 6.500L10 9.500 13 6.500" />
      </svg>
      <svg viewBox="0 0 9 16" className="ml-[17px] h-[16px] w-[9px]" fill="#c8c8ca">
        <path d="M0 0h9v16L4.500 11 0 16z" />
      </svg>
      <div className="ml-[13px] h-[21px] w-px bg-[#222226]" />
      <ChevronsRight className="ml-[5px] h-[24px] w-[24px] text-[#c8c8ca]" strokeWidth={2} />
    </div>
  );
}

function Browser() {
  return (
    <div className="flex h-[1024px] w-[1280px] flex-col overflow-hidden bg-[#2a2a2e]">
      {/* tab strip */}
      <div className={`flex h-[44px] shrink-0 items-center bg-[#1c1b22] text-[14px] text-[#fbfbfe] ${UI}`}>
        <div className="ml-[12px] flex h-[16px] w-[16px] items-center justify-center rounded-[2px] bg-[#0087c3] font-['Open_Sans',sans-serif] text-[14px] font-extrabold leading-none">Z</div>
        <svg viewBox="0 0 16 16" className="ml-[25px] h-[16px] w-[16px]" fill="none" stroke="#f98012" strokeWidth="2.600">
          <path d="M6 5.500V14M10 14V9Q10 6 12.300 6Q14.700 6 14.700 9V14" />
          <path stroke="#55504c" strokeWidth="1.500" d="M0 5L5 3H7M1 5V9" />
        </svg>
        <Globe className="ml-[23px] h-[18px] w-[18px]" strokeWidth={2} />
        <ChevronLeft className="ml-[14px] h-[24px] w-[24px] text-[#55545c]" strokeWidth={1.4} />
        <div className="ml-[6px] flex h-[36px] w-[72px] items-center rounded-[4px] bg-[#42414d] pl-[9px]">
          <div className="w-[40px] overflow-hidden [mask-image:linear-gradient(to_right,#000_16px,transparent_44px)]"><Fit w={40}>UE VLS</Fit></div>
          <X className="-ml-px h-[16px] w-[16px]" strokeWidth={1.8} />
        </div>
        <div className="flex w-[808px] overflow-hidden border-r border-[#55545c]">
          {TABS.map((t, i) => (
            <div key={i} className="flex w-[76px] shrink-0 items-center pl-[12px]">
              {t.icon}
              <div className={`${t.icon ? "ml-[6px] w-[35px]" : "w-[57px]"} overflow-hidden ${i ? FADE : ""}`}>
                <Fit w={t.w}>{t.label}</Fit>
              </div>
            </div>
          ))}
        </div>
        <ChevronRight className="ml-[5px] h-[22px] w-[22px]" strokeWidth={1.8} />
        <Plus className="ml-[14px] h-[21px] w-[21px]" strokeWidth={1.6} />
        <ChevronDown className="ml-[18px] h-[24px] w-[24px]" strokeWidth={1.6} />
        <div className="mb-[2px] ml-auto h-px w-[10px] bg-white" />
        <svg viewBox="0 0 10 10" className="ml-[20px] h-[10px] w-[10px]" fill="none" stroke="#fff"><path d="M.5 2.500h7v7h-7zM2.500 2.500v-2h7v7h-2" /></svg>
        <svg viewBox="0 0 10 10" className="ml-[20px] mr-[14px] h-[10px] w-[10px]" fill="none" stroke="#fff"><path d="M0 0l10 10M10 0L0 10" /></svg>
      </div>
      {/* address bar */}
      <div className={`flex h-[41px] shrink-0 items-center border-b border-[#0c0c0d] bg-[#2b2a33] text-[14px] text-[#fbfbfe] ${UI}`}>
        <ArrowLeft className="ml-[12px] h-[24px] w-[24px] text-[#75747c]" strokeWidth={1.4} />
        <ArrowRight className="ml-[12px] h-[24px] w-[24px] text-[#75747c]" strokeWidth={1.4} />
        <RotateCw className="ml-[15px] h-[20px] w-[20px]" strokeWidth={2} />
        <div className="ml-[111px] flex h-[32px] w-[880px] items-center rounded-[4px] bg-[#1c1b22]">
          <Shield className="ml-[6px] h-[20px] w-[20px]" strokeWidth={1.9} />
          <Lock className="ml-[9px] h-[19px] w-[19px]" strokeWidth={2} />
          <div className="ml-[8px] flex w-[788px] overflow-hidden text-[#8f8f96] [mask-image:linear-gradient(to_right,#000_96%,transparent)]">
            <Fit w={191}>https://moodle-sciences-22.</Fit>
            <Fit w={147} className="text-[#fbfbfe]">sorbonne-universite.fr</Fit>
            <Fit w={450}>/pluginfile.php/18829/course/section/3363/cours6_show.pdf?time</Fit>
          </div>
          <Star className="ml-[5px] h-[18px] w-[18px]" strokeWidth={2} />
        </div>
        <svg viewBox="0 0 16 16" className="ml-auto h-[15px] w-[15px]" fill="none" stroke="#fbfbfe" strokeWidth="1.600">
          <path d="M1 2.500Q1 1.500 2 1.500H14Q15 1.500 15 2.500V7.500Q15 14.500 8 14.500Q1 14.500 1 7.500ZM4.500 6L8 9.300 11.500 6" />
        </svg>
        <Menu className="ml-[19px] mr-[15px] h-[18px] w-[18px]" strokeWidth={2} />
      </div>
      {/* viewer toolbar */}
      <div className={`flex h-[33px] shrink-0 items-center border-b border-[#0c0c0d] bg-[#38383d] text-[12px] text-[#e4e4e6] ${UI}`}>
        <div className="ml-[1px] flex h-[28px] w-[29px] items-center justify-center rounded-[2px] bg-[#252528]">
          <svg viewBox="0 0 16 16" className="h-[15px] w-[16px]" fill="none" stroke="#d0d0d2" strokeWidth="1.800">
            <rect x="1" y="1" width="14" height="14" rx="2" />
            <path d="M8 1v14" />
            <path strokeWidth="1.200" d="M3 4h3.500M3 6.500h3.500M3 9h3.500" />
          </svg>
        </div>
        <ArrowUp className="ml-[34px] h-[25px] w-[25px] text-[#d0d0d2]" strokeWidth={2} />
        <div className="ml-[2px] h-[20px] w-px bg-[#222226]" />
        <ArrowDown className="ml-[2px] h-[25px] w-[25px] text-[#86868a]" strokeWidth={2} />
        <div className="ml-[3px] flex h-[26px] w-[56px] items-center justify-end rounded-[1px] border border-[#6f6f73] bg-[#424247] pr-[7px]"><Fit w={14}>14</Fit></div>
        <Fit w={33} className="ml-[5px]">sur 14</Fit>
        <Minus className="ml-[327px] h-[20px] w-[20px] text-[#c8c8ca]" strokeWidth={2.3} />
        <div className="ml-[4px] h-[20px] w-px bg-[#222226]" />
        <Plus className="ml-[2px] h-[24px] w-[24px] text-[#c8c8ca]" strokeWidth={2} />
        <div className="ml-[5px] flex h-[28px] w-[143px] items-center rounded-[1px] bg-[#4a4a4f] pl-[8px]">
          <Fit w={32}>200 %</Fit>
          <ChevronDown className="ml-auto mr-[7px] h-[16px] w-[16px]" strokeWidth={4} />
        </div>
        <PdfIcons />
      </div>
      <div className="flex min-h-0 flex-1">
        {/* outline */}
        <div className="flex w-[200px] shrink-0 flex-col border-r border-[#1c1c1e] bg-[#252527]">
          <div className="flex h-[33px] items-center border-b border-[#1c1c1e] bg-[#313133] pl-[8px]">
            <svg viewBox="0 0 15 15" className="h-[15px] w-[15px]" fill="#c8c8ca"><path d="M0 0h6.500v6.500H0zM8.500 0H15v6.500H8.500zM0 8.500h6.500V15H0zM8.500 8.500H15V15H8.500z" /></svg>
            <div className="ml-[9px] flex h-[28px] w-[28px] items-center justify-center rounded-[2px] bg-[#1f1f20]">
              <svg viewBox="0 0 15 15" className="h-[15px] w-[15px]" stroke="#d0d0d2" strokeWidth="2"><path d="M0 1h2M4 1h11M3 5h2M6 5h9M3 9.500h2M6 9.500h9M0 14h2M4 14h11" /></svg>
            </div>
            <Paperclip className="ml-[6px] h-[19px] w-[20px] text-[#77777a]" strokeWidth={1.8} />
            <Layers className="ml-[10px] h-[19px] w-[19px] text-[#77777a]" strokeWidth={2} />
            <div className="ml-[50px] h-[21px] w-px bg-[#1c1c1e]" />
            <svg viewBox="0 0 16 15" className="ml-[10px] h-[15px] w-[16px]" stroke="#c8c8ca" strokeWidth="2"><path d="M0 1h2M3 1h4M3 5h2M3 9.500h2M6 9.500h9M0 14h2M4 14h11" /><path d="M15 5H10" /><path fill="#c8c8ca" stroke="none" d="M6 5L11 1V9z" /></svg>
          </div>
          <div className={`flex flex-col pl-[8px] pt-[2px] text-[12px] leading-[24px] text-[#c4c4c6] ${UI}`}>
            <Fit w={53}>Registres</Fit>
            <Fit w={27}>Fifos</Fit>
            <Fit w={24}>REG</Fit>
            <Fit w={97}>Synthèse logique</Fit>
          </div>
        </div>
        {/* pages */}
        <div className="ml-[57px] flex w-[967px] flex-col">
          <div className="flex h-[161px] shrink-0 flex-col justify-end bg-white"><SlideFooter page="13 / 14" /></div>
          <div className="mt-[11px] flex h-[725px] flex-col bg-white shadow-[0_0_4px_#1d1d20]">
            <div className="flex h-[29px] shrink-0 bg-[#ffdd3a]">
              <div className="flex w-[483px] items-center justify-end bg-[#0000a3] pb-[2px] pr-[13px] text-[#ffc533]"><Fit w={35} className={`${SLIDE} text-[16px]`}>VLSI</Fit></div>
            </div>
            <div className="flex h-[74px] shrink-0 items-center border-t border-[#ffe98a] bg-[#ffe23b] pl-[23px] pt-[6px] text-[#3333b2]">
              <Fit w={652} className={`${SLIDE} text-[37px] leading-[40px]`}>Synthèse Étape 3 : Projection structurelle</Fit>
            </div>
            <div className="mt-[187px] flex flex-col pl-[30px] text-black">
              <Fit w={783} className={`${SLIDE} text-[27px] leading-[37px]`}>
                Permet de convertir des équattions en <i>netlist</i> de portes logiques.
              </Fit>
              <div className="mt-[3px] flex items-center font-['Liberation_Mono',monospace] text-[26px] leading-[37px]">
                <Fit w={60}>.vbe</Fit>
                <svg viewBox="0 0 50 19" className="ml-[12px] h-[19px] w-[50px]" fill="none" stroke="#000" strokeWidth="1.200"><path d="M0 9.500h19M31 2L49 9.500 31 17" /></svg>
                <Fit w={60} className="ml-[12px]">.vst</Fit>
              </div>
              <div className={`ml-[107px] mt-[11px] flex text-[27px] leading-[37px] tracking-[3px] ${SLIDE}`}>
                <Fit w={69}>boog</Fit>
                <Fit w={81} className="ml-[20px]">alu_o</Fit>
                <Fit w={47} className="ml-[24px]">alu</Fit>
              </div>
            </div>
            <div className="mt-auto"><SlideFooter page="14 / 14" /></div>
          </div>
        </div>
      </div>
    </div>
  );
}

export default function App() {
  return (
    <div className="flex h-[1080px] w-[3200px] overflow-hidden bg-black">
      <LeftScreen />
      <Browser />
    </div>
  );
}
